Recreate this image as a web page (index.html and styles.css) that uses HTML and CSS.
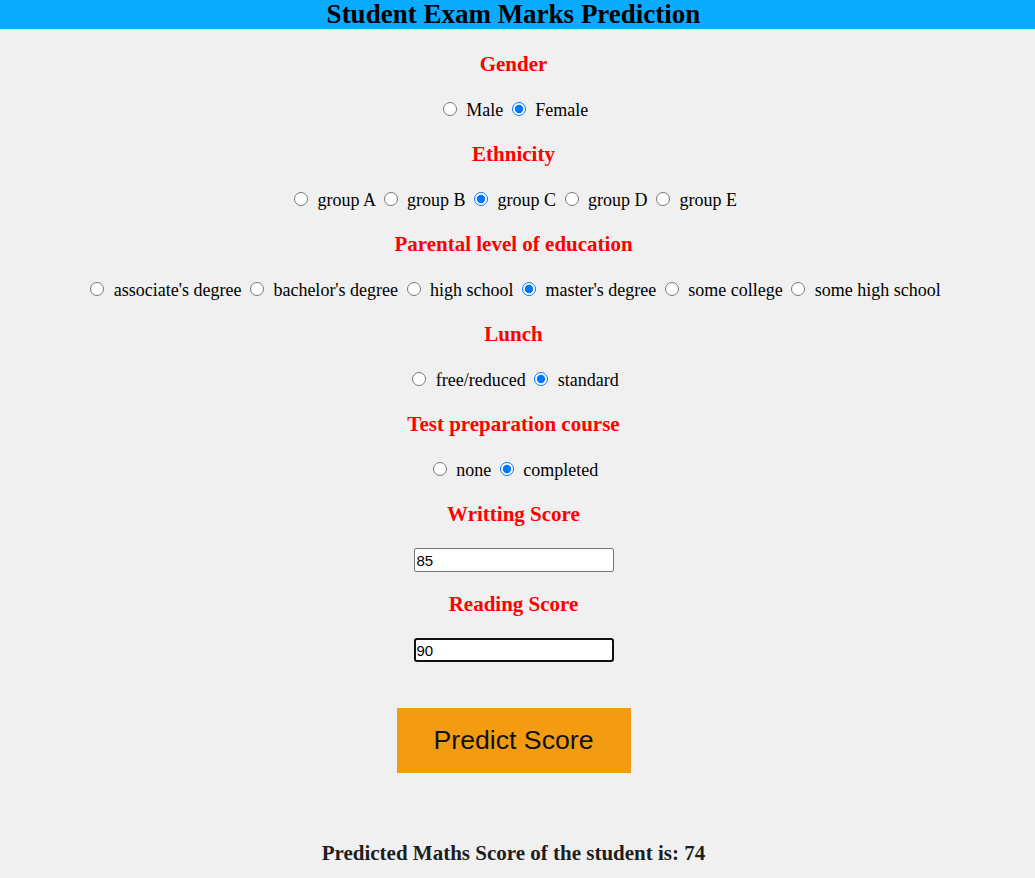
FILE: index.html
```html
<!DOCTYPE html>
<html>
<head>
<meta charset="utf-8">
<title>Student Exam Marks Prediction</title>
<link rel="stylesheet" href="styles.css">
</head>
<body>
<header class="topbar"><h2 class="title">Student Exam Marks Prediction</h2></header>
<form class="form">
  <h3 class="field-label first">Gender</h3>
  <div class="row">
    <input type="radio" name="gender" id="g1"> <label for="g1">Male</label>
    <input type="radio" name="gender" id="g2" checked> <label for="g2">Female</label>
  </div>

  <h3 class="field-label">Ethnicity</h3>
  <div class="row">
    <input type="radio" name="eth" id="e1"> <label for="e1">group A</label>
    <input type="radio" name="eth" id="e2"> <label for="e2">group B</label>
    <input type="radio" name="eth" id="e3" checked> <label for="e3">group C</label>
    <input type="radio" name="eth" id="e4"> <label for="e4">group D</label>
    <input type="radio" name="eth" id="e5"> <label for="e5">group E</label>
  </div>

  <h3 class="field-label">Parental level of education</h3>
  <div class="row">
    <input type="radio" name="par" id="p1"> <label for="p1">associate's degree</label>
    <input type="radio" name="par" id="p2"> <label for="p2">bachelor's degree</label>
    <input type="radio" name="par" id="p3"> <label for="p3">high school</label>
    <input type="radio" name="par" id="p4" checked> <label for="p4">master's degree</label>
    <input type="radio" name="par" id="p5"> <label for="p5">some college</label>
    <input type="radio" name="par" id="p6"> <label for="p6">some high school</label>
  </div>

  <h3 class="field-label">Lunch</h3>
  <div class="row">
    <input type="radio" name="lunch" id="l1"> <label for="l1">free/reduced</label>
    <input type="radio" name="lunch" id="l2" checked> <label for="l2">standard</label>
  </div>

  <h3 class="field-label">Test preparation course</h3>
  <div class="row">
    <input type="radio" name="prep" id="t1"> <label for="t1">none</label>
    <input type="radio" name="prep" id="t2" checked> <label for="t2">completed</label>
  </div>

  <h3 class="field-label">Writting Score</h3>
  <div class="row">
    <input type="text" class="score" value="85">
  </div>

  <h3 class="field-label">Reading Score</h3>
  <div class="row">
    <input type="text" class="score score-active" value="90">
  </div>

  <div class="actions">
    <button type="button" class="predict">Predict Score</button>
  </div>

  <h3 class="result">Predicted Maths Score of the student is: 74</h3>
</form>
</body>
</html>
```

FILE: styles.css
```css
html, body {
  margin: 0;
  padding: 0;
}
body {
  background: #f0f0f0;
  font-family: "Liberation Serif", "Times New Roman", serif;
  font-size: 18px;
  color: #000;
}
.topbar {
  background: #0aabff;
  height: 29px;
  padding-right: 8px;
}
.title {
  margin: 0;
  font-size: 27px;
  line-height: 29px;
  font-weight: bold;
  text-align: center;
  color: #000;
}
.form {
  text-align: center;
  padding-right: 8px;
}
.field-label {
  margin: 23px 0 0;
  font-size: 21px;
  line-height: 23px;
  font-weight: bold;
  color: #ff0000;
}
.field-label.first {
  margin-top: 24px;
}
.row {
  margin-top: 24px;
  height: 20px;
  line-height: 20px;
}
.row input[type="radio"] {
  width: 14px;
  height: 14px;
  margin: 2px 5px 0 4px;
}
.score {
  box-sizing: border-box;
  width: 200px;
  height: 24px;
  margin: -2px 0 0;
  padding: 1px 2px;
  border: 1px solid #767676;
  border-radius: 2px;
  background: #fff;
  font-family: "Liberation Sans", Arial, sans-serif;
  font-size: 15px;
  color: #000;
  vertical-align: top;
  outline: none;
}
.score-active {
  border: 2px solid #101010;
  border-radius: 3px;
  padding: 0 1px;
}
.actions {
  margin-top: 48px;
}
.predict {
  width: 234px;
  height: 65px;
  border: none;
  background: #f39c12;
  font-family: "Liberation Sans", Arial, sans-serif;
  font-size: 26.67px;
  color: #111;
  cursor: pointer;
}
.result {
  margin: 69px 0 0;
  font-size: 21px;
  line-height: 23px;
  font-weight: bold;
  color: #1e1e1e;
}
```
